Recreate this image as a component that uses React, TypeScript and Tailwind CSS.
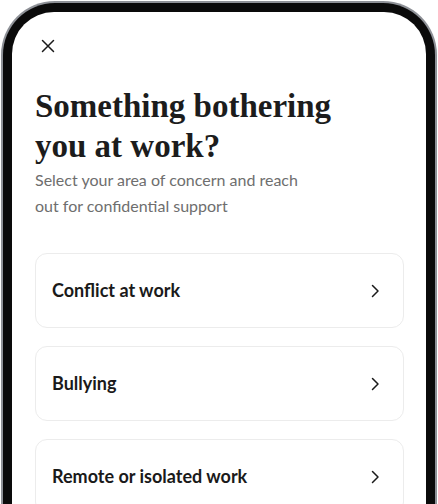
import React from "react";

const items = ["Conflict at work", "Bullying", "Remote or isolated work"];

function Chevron() {
  return (
    <svg width="14" height="14" viewBox="0 0 14 14" fill="none" className="shrink-0">
      <path d="M4.5 1.5 L10 7 L4.5 12.5" stroke="#1a1a1a" strokeWidth="1.5" strokeLinecap="round" strokeLinejoin="round" />
    </svg>
  );
}

export default function App() {
  return (
    <div className="w-[438px] h-[504px] overflow-hidden bg-white">
      <div className="ml-px mt-px w-[436px] h-[640px] rounded-[54px] bg-[#8e9197] p-[2px]">
        <div className="h-full rounded-[52px] bg-[#0a0a0a] p-[9px]">
          <div className="h-full rounded-[42px] bg-white pl-[23px] pr-[22px] pt-[27px]">
            <svg width="14" height="14" viewBox="0 0 14 14" fill="none" className="ml-[6px]">
              <path d="M1.5 1.5 L12.5 12.5 M12.5 1.5 L1.5 12.5" stroke="#1a1a1a" strokeWidth="1.5" strokeLinecap="round" />
            </svg>
            <h1 className="mt-[33px] text-[33px] leading-[40px] font-bold text-[#1c1c1c]" style={{ fontFamily: '"Liberation Serif", serif' }}>
              Something bothering
              <br />
              you at work?
            </h1>
            <p className="mt-[1px] text-[16px] leading-[26px] text-[#6e6e6e]" style={{ fontFamily: 'Lato, sans-serif' }}>
              Select your area of concern and reach
              <br />
              out for confidential support
            </p>
            <div className="mt-[34px] flex flex-col gap-[18px]">
              {items.map((t) => (
                <div key={t} className="h-[75px] rounded-[12px] border border-[#ececec] flex items-center justify-between pl-[16px] pr-[21px]">
                  <span className="text-[18px] font-bold text-[#1a1a1a]" style={{ fontFamily: 'Lato, sans-serif' }}>{t}</span>
                  <Chevron />
                </div>
              ))}
            </div>
          </div>
        </div>
      </div>
    </div>
  );
}
